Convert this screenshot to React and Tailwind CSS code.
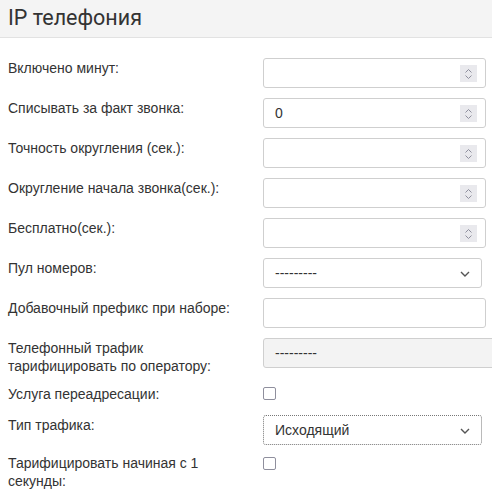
import React from 'react';

const Spinner = () => (
  <div className="absolute right-[8px] top-[6px] w-[17px] h-[17px] bg-[#e9e9ed] flex flex-col items-center justify-center gap-[2px]">
    <svg width="7" height="4" viewBox="0 0 7 4"><path d="M0.5 3.5 L3.5 0.5 L6.5 3.5" fill="none" stroke="#8f8f9d" strokeWidth="1" /></svg>
    <svg width="7" height="4" viewBox="0 0 7 4"><path d="M0.5 0.5 L3.5 3.5 L6.5 0.5" fill="none" stroke="#8f8f9d" strokeWidth="1" /></svg>
  </div>
);

const Chevron = () => (
  <svg className="absolute right-[11px] top-[12px]" width="10" height="6" viewBox="0 0 10 6">
    <path d="M1 1 L5 5 L9 1" fill="none" stroke="#555" strokeWidth="1.4" />
  </svg>
);

const NumberField = ({ value }) => (
  <div className="relative w-[223px] h-[30px] border border-[#cfcfcf] rounded-[3px] bg-white flex items-center px-[11px] text-[14px] text-[#333]">
    {value}
    <Spinner />
  </div>
);

const SelectField = ({ value, focused }) => (
  <div
    className={`relative w-[219px] h-[30px] rounded-[3px] bg-white flex items-center px-[11px] text-[14px] text-[#333] ${
      focused ? 'border border-dotted border-[#777]' : 'border border-[#cfcfcf]'
    }`}
  >
    {value}
    <Chevron />
  </div>
);

const Row = ({ label, children, className = 'h-[40px]', labelPad = 'pt-[0.5px]' }) => (
  <div className={`grid grid-cols-[255px_1fr] ${className}`}>
    <div className={`${labelPad} leading-[18px] text-[14px] text-[#333] pr-2`}>{label}</div>
    <div>{children}</div>
  </div>
);

const Checkbox = () => (
  <div className="w-[13px] h-[13px] border border-[#8f8f9d] rounded-[2px] bg-white" />
);

const App = () => {
  return (
    <div className="w-[492px] h-[499px] overflow-hidden bg-white" style={{ fontFamily: '"Liberation Sans", Arial, sans-serif' }}>
      <div className="h-[38px] bg-[#f4f4f4] border-b border-[#e2e2e2] flex items-center px-[8px]">
        <h2 className="text-[21.5px] text-[#333] font-normal" style={{ fontFamily: 'Roboto, "Liberation Sans", sans-serif' }}>IP телефония</h2>
      </div>
      <div className="pl-[8px] pt-[20px] flex flex-col">
        <Row label="Включено минут:"><NumberField value="" /></Row>
        <Row label="Списывать за факт звонка:"><NumberField value="0" /></Row>
        <Row label="Точность округления (сек.):"><NumberField value="" /></Row>
        <Row label="Округление начала звонка(сек.):"><NumberField value="" /></Row>
        <Row label="Бесплатно(сек.):"><NumberField value="" /></Row>
        <Row label="Пул номеров:"><SelectField value="---------" /></Row>
        <Row label="Добавочный префикс при наборе:">
          <div className="w-[223px] h-[30px] border border-[#cfcfcf] rounded-[3px] bg-white" />
        </Row>
        <Row className="h-[47px]" label={<>Телефонный трафик<br />тарифицировать по оператору:</>}>
          <div className="w-[240px] h-[30px] border border-[#cfcfcf] rounded-[3px] bg-[#f3f3f3] flex items-center px-[11px] text-[14px] text-[#333]">---------</div>
        </Row>
        <Row className="h-[29px]" labelPad="pt-0" label="Услуга переадресации:">
          <div className="pt-[2px]"><Checkbox /></div>
        </Row>
        <Row className="h-[40px]" labelPad="pt-[1.5px]" label="Тип трафика:">
          <div className="pt-[1px]"><SelectField value="Исходящий" focused /></div>
        </Row>
        <Row className="h-auto" labelPad="pt-0" label={<>Тарифицировать начиная с 1<br />секунды:</>}>
          <div className="pt-[3px]"><Checkbox /></div>
        </Row>
      </div>
    </div>
  );
};

export default App;
